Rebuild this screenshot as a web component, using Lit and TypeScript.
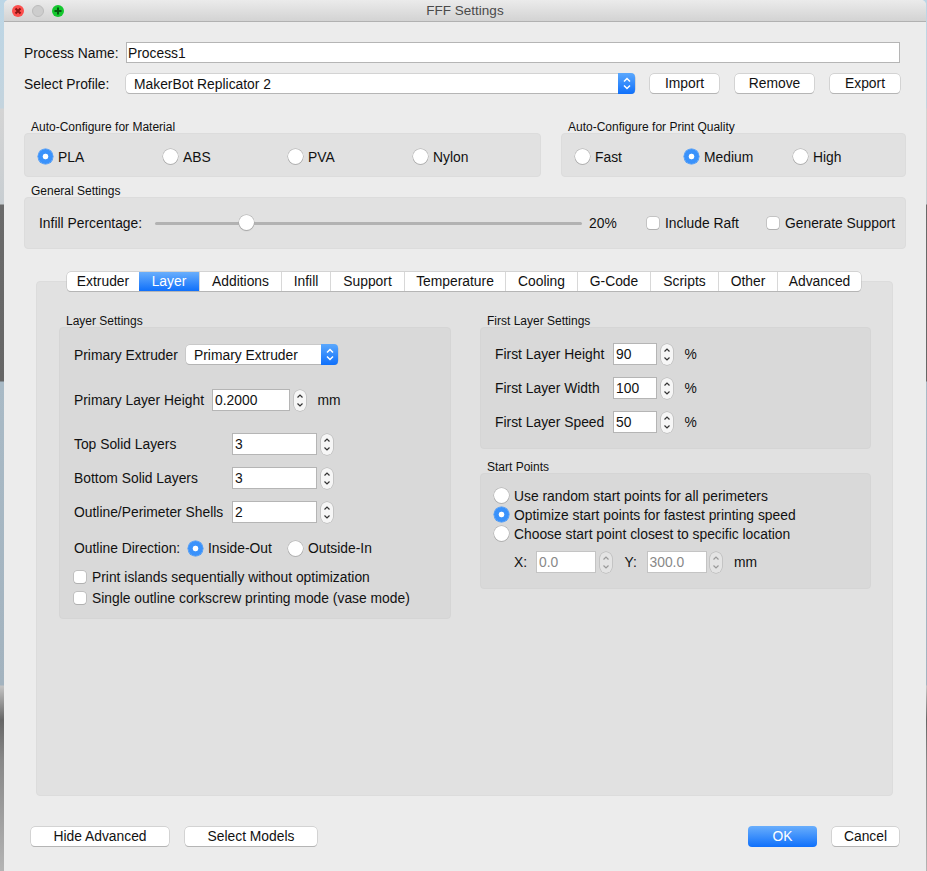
import { LitElement, html, css, TemplateResult } from "lit";
import { customElement } from "lit/decorators.js";

const stepper = (disabled = false): TemplateResult => html`
    <span class="stepper ${disabled ? "off" : ""}">
        <svg width="8" height="17" viewBox="0 0 8 17">
            <path d="M1.5 5.5 L4 3 L6.5 5.5 M1.5 11.5 L4 14 L6.5 11.5" fill="none" stroke="currentColor" stroke-width="1.2" />
        </svg>
    </span>
`;

const chevrons = html`
    <span class="chev">
        <svg width="10" height="17" viewBox="0 0 10 17">
            <path d="M2 6.5 L5 3.5 L8 6.5 M2 10.5 L5 13.5 L8 10.5" fill="none" stroke="#fff" stroke-width="1.5" />
        </svg>
    </span>
`;

const radio = (label: string, on = false): TemplateResult => html`
    <span class="radio-row"><i class="radio ${on ? "on" : ""}"></i>${label}</span>
`;

const check = (label: string): TemplateResult => html`
    <span class="check-row"><i class="check"></i>${label}</span>
`;

@customElement("app-root")
export class AppRoot extends LitElement {
    static styles = css`
        :host {
            background: linear-gradient(
                #bcd6e6 0,
                #c4d4de 108px,
                #d4d4d4 109px,
                #c8ced2 204px,
                #6a6a6a 205px,
                #666 381px,
                #a9bac6 382px,
                #a3b3bf 685px,
                #c4c4c4 686px,
                #666 720px,
                #888 760px,
                #b4b4b4 871px
            );
            box-sizing: border-box;
            color: #111;
            display: block;
            font-family: "Liberation Sans", Arial, sans-serif;
            font-size: 13.85px;
            height: 871px;
            overflow: hidden;
            padding-left: 4px;
            width: 927px;
        }

        .window {
            background: #ececec;
            border-radius: 5px 5px 0 0;
            height: 871px;
            width: 922px;
        }

        .titlebar {
            align-items: center;
            background: linear-gradient(#ebebeb, #d3d3d3);
            border-bottom: 1px solid #b1b1b1;
            border-radius: 5px 5px 0 0;
            color: #4a4a4a;
            display: flex;
            font-size: 13.5px;
            height: 21px;
            justify-content: center;
            position: relative;
        }

        .lights {
            display: flex;
            gap: 8px;
            left: 8px;
            position: absolute;
            top: 5px;
        }

        .light {
            border-radius: 50%;
            height: 12px;
            width: 12px;
        }

        .light svg {
            display: block;
        }

        .red { background: #fc4e4c; }
        .grey { background: #cdcdcd; border: 1px solid #bcbcbc; box-sizing: border-box; }
        .green { background: #14c72e; }

        .body {
            padding: 20px 20px 0;
        }

        .row {
            align-items: center;
            display: flex;
        }

        .process-row {
            padding-right: 6px;
        }

        .label-name {
            width: 102px;
        }

        .text-field {
            background: #fff;
            border: 1px solid #b5b5b5;
            box-sizing: border-box;
            flex: 1;
            height: 21px;
            line-height: 20px;
            padding-left: 1px;
        }

        .profile-row {
            margin-top: 11px;
        }

        .select {
            background: #fff;
            border-radius: 4px;
            box-shadow: 0 0 0 0.5px #b9b9b9, 0 1px 0 #b0b0b0;
            box-sizing: border-box;
            display: flex;
            height: 19px;
            justify-content: space-between;
            line-height: 20px;
            padding-left: 8px;
        }

        .select.profile {
            margin-right: 15px;
            width: 509px;
        }

        .chev {
            align-items: center;
            background: linear-gradient(#5ba8fd, #0f70fb);
            border-radius: 0 4px 4px 0;
            display: flex;
            height: 21px;
            justify-content: center;
            margin-top: -1px;
            width: 17px;
        }

        .btn {
            background: #fff;
            border-radius: 4px;
            box-shadow: 0 0 0 0.5px #b9b9b9, 0 1px 0 #b0b0b0;
            box-sizing: border-box;
            height: 19px;
            line-height: 19px;
            text-align: center;
        }

        .btn.primary {
            background: linear-gradient(#69aefc, #0f70fb);
            box-shadow: none;
            color: #fff;
            height: 21px;
            line-height: 21px;
            margin-top: -1px;
            width: 69px;
        }

        .import { width: 69px; }
        .remove { width: 79px; }
        .export { width: 70px; }
        .hide-advanced { width: 138px; }
        .select-models { width: 132px; }
        .cancel { width: 67px; }

        .file-btns {
            display: flex;
            gap: 16px;
        }

        .group-title {
            color: #111;
            font-size: 12px;
            height: 14px;
            line-height: 16px;
            padding-left: 7px;
        }

        .group {
            background: #e1e1e1;
            border-radius: 4px;
            border: 1px solid #dcdcdc;
            box-sizing: border-box;
        }

        .auto-row {
            display: flex;
            gap: 20px;
            margin-top: 26px;
        }

        .material {
            width: 517px;
        }

        .quality {
            width: 345px;
        }

        .auto-group {
            align-items: center;
            display: flex;
            height: 44px;
            padding: 3px 0 0 13px;
        }

        .radio-row,
        .check-row {
            align-items: center;
            display: inline-flex;
            white-space: nowrap;
        }

        .radio {
            background: #fff;
            border-radius: 50%;
            box-shadow: 0 0 0 0.5px #a8a8a8, 0 1px 0 #bbb;
            display: inline-block;
            flex: none;
            height: 15px;
            margin-right: 5px;
            position: relative;
            width: 15px;
        }

        .radio.on {
            background: radial-gradient(circle, #fff 0, #fff 2.5px, #3a92fb 3.2px);
            box-shadow: 0 0 0 0.5px #3a92fb;
        }

        .check {
            background: #fff;
            border-radius: 3px;
            box-shadow: 0 0 0 0.5px #a8a8a8, 0 1px 0 #bbb;
            display: inline-block;
            flex: none;
            height: 12px;
            margin-right: 6px;
            width: 12px;
        }

        .material .radio-row { width: 125px; }
        .quality .radio-row { width: 109px; }

        .general-title {
            margin-top: 6px;
        }

        .general {
            align-items: center;
            display: flex;
            height: 52px;
            padding-left: 14px;
        }

        .infill-label {
            width: 116px;
        }

        .slider {
            align-items: center;
            display: flex;
            height: 18px;
            position: relative;
            width: 427px;
        }

        .slider::before {
            background: #b2b2b2;
            border-radius: 2px;
            content: "";
            height: 3px;
            width: 100%;
        }

        .thumb {
            background: #fff;
            border-radius: 50%;
            box-shadow: 0 0 0 0.5px #a8a8a8, 0 1px 1px #aaa;
            height: 15px;
            left: 84px;
            position: absolute;
            top: 1px;
            width: 15px;
        }

        .pct {
            margin-left: 7px;
            width: 58px;
        }

        .general .check-row {
            width: 120px;
        }

        .tab-panel {
            background: #e1e1e1;
            border: 1px solid #dcdcdc;
            border-radius: 4px;
            box-sizing: border-box;
            height: 515px;
            margin-left: 12px;
            margin-top: 32px;
            padding: 0 21px 0 22px;
            position: relative;
            width: 857px;
        }

        .tabs {
            background: #fff;
            border-radius: 4px;
            box-shadow: 0 0 0 0.5px #b9b9b9, 0 1px 0 #b0b0b0;
            display: flex;
            height: 19px;
            left: 30px;
            line-height: 19px;
            overflow: hidden;
            position: absolute;
            top: -10px;
        }

        .tab {
            border-left: 1px solid #d8d8d8;
            box-sizing: border-box;
            text-align: center;
        }

        .tab:first-child {
            border-left: 0;
        }

        .tab.active {
            background: linear-gradient(#69aefc, #0f70fb);
            border-left: 0;
            color: #fff;
        }

        .columns {
            display: flex;
            gap: 29px;
            padding-top: 31px;
        }

        .col-left {
            width: 392px;
        }

        .col-right {
            width: 391px;
        }

        .inner {
            background: #d9d9d9;
            border: 1px solid #d5d5d5;
            border-radius: 4px;
            box-sizing: border-box;
        }

        .layer-settings {
            height: 292px;
            padding: 17px 14px 0;
        }

        .first-layer {
            height: 122px;
            padding: 9px 14px 0;
        }

        .start-points {
            height: 116px;
            padding: 12px 13px 0;
        }

        .start-title {
            margin-top: 10px;
        }

        .field {
            background: #fff;
            border: 1px solid #b5b5b5;
            box-sizing: border-box;
            height: 22px;
            line-height: 20px;
            padding-left: 2px;
        }

        .stepper {
            align-items: center;
            background: #f6f6f6;
            border-radius: 6px;
            box-shadow: 0 0 0 0.5px #b0b0b0;
            color: #333;
            display: inline-flex;
            height: 21px;
            justify-content: center;
            margin-left: 3.5px;
            width: 12px;
        }

        .stepper.off {
            background: #e4e4e4;
            color: #999;
        }

        .extruder-row .label {
            width: 112px;
        }

        .select.extruder {
            width: 152px;
        }

        .height-row {
            margin-top: 25px;
        }

        .height-row .label {
            width: 138px;
        }

        .height-row .field {
            width: 78px;
        }

        .unit {
            margin-left: 12px;
        }

        .solid-row {
            height: 34px;
        }

        .solid-first {
            margin-top: 16px;
        }

        .solid-row .label {
            width: 158px;
        }

        .solid-row .field {
            width: 85px;
        }

        .direction-row {
            height: 22px;
            margin-top: 8px;
        }

        .direction-row .label {
            width: 114px;
        }

        .direction-row .radio-row {
            width: 100px;
        }

        .checks {
            display: flex;
            flex-direction: column;
            margin-top: 7px;
        }

        .checks .check-row {
            height: 21px;
        }

        .first-row {
            height: 34px;
        }

        .first-row .label {
            width: 118px;
        }

        .first-row .field {
            width: 44px;
        }

        .start-list {
            display: flex;
            flex-direction: column;
        }

        .start-list .radio-row {
            height: 19px;
        }

        .xy-row {
            margin-top: 8px;
            padding-left: 20px;
        }

        .xy-row .field {
            border-color: #c4c4c4;
            color: #888;
            width: 60px;
        }

        .xy-label {
            width: 22px;
        }

        .xy-label.y {
            margin-left: 13px;
        }

        .footer {
            display: flex;
            justify-content: space-between;
            margin-top: 31px;
            padding: 0 7px;
        }

        .footer-group {
            display: flex;
            gap: 16px;
        }

        .footer-group.confirm {
            gap: 15px;
        }
    `;

    render(): TemplateResult {
        const tabs: [string, number, boolean?][] = [
            ["Extruder", 72],
            ["Layer", 60, true],
            ["Additions", 82],
            ["Infill", 49],
            ["Support", 74],
            ["Temperature", 101],
            ["Cooling", 72],
            ["G-Code", 73],
            ["Scripts", 68],
            ["Other", 59],
            ["Advanced", 84],
        ];
        return html`
            <div class="window">
                <div class="titlebar">
                    <div class="lights">
                        <span class="light red">
                            <svg width="12" height="12" viewBox="0 0 12 12">
                                <path d="M3.5 3.5 L8.5 8.5 M8.5 3.5 L3.5 8.5" stroke="#8c1512" stroke-width="2" />
                            </svg>
                        </span>
                        <span class="light grey"></span>
                        <span class="light green">
                            <svg width="12" height="12" viewBox="0 0 12 12">
                                <path d="M6 2.5 V9.5 M2.5 6 H9.5" stroke="#045c10" stroke-width="2" />
                            </svg>
                        </span>
                    </div>
                    FFF Settings
                </div>
                <div class="body">
                    <div class="row process-row">
                        <span class="label-name">Process Name:</span>
                        <div class="text-field">Process1</div>
                    </div>
                    <div class="row profile-row">
                        <span class="label-name">Select Profile:</span>
                        <div class="select profile">MakerBot Replicator 2 ${chevrons}</div>
                        <div class="file-btns">
                            <div class="btn import">Import</div>
                            <div class="btn remove">Remove</div>
                            <div class="btn export">Export</div>
                        </div>
                    </div>

                    <div class="auto-row">
                        <div class="material">
                            <div class="group-title">Auto-Configure for Material</div>
                            <div class="group auto-group">
                                ${radio("PLA", true)} ${radio("ABS")} ${radio("PVA")} ${radio("Nylon")}
                            </div>
                        </div>
                        <div class="quality">
                            <div class="group-title">Auto-Configure for Print Quality</div>
                            <div class="group auto-group">
                                ${radio("Fast")} ${radio("Medium", true)} ${radio("High")}
                            </div>
                        </div>
                    </div>

                    <div class="group-title general-title">General Settings</div>
                    <div class="group general">
                        <span class="infill-label">Infill Percentage:</span>
                        <div class="slider"><i class="thumb"></i></div>
                        <span class="pct">20%</span>
                        ${check("Include Raft")} ${check("Generate Support")}
                    </div>

                    <div class="tab-panel">
                        <div class="tabs">
                            ${tabs.map(
                                ([name, width, active]) =>
                                    html`<div class="tab ${active ? "active" : ""}" style="width: ${width}px">${name}</div>`,
                            )}
                        </div>
                        <div class="columns">
                            <div class="col-left">
                                <div class="group-title">Layer Settings</div>
                                <div class="inner layer-settings">
                                    <div class="row extruder-row">
                                        <span class="label">Primary Extruder</span>
                                        <div class="select extruder">Primary Extruder ${chevrons}</div>
                                    </div>
                                    <div class="row height-row">
                                        <span class="label">Primary Layer Height</span>
                                        <div class="field">0.2000</div>
                                        ${stepper()}
                                        <span class="unit">mm</span>
                                    </div>
                                    <div class="row solid-row solid-first">
                                        <span class="label">Top Solid Layers</span>
                                        <div class="field">3</div>
                                        ${stepper()}
                                    </div>
                                    <div class="row solid-row">
                                        <span class="label">Bottom Solid Layers</span>
                                        <div class="field">3</div>
                                        ${stepper()}
                                    </div>
                                    <div class="row solid-row">
                                        <span class="label">Outline/Perimeter Shells</span>
                                        <div class="field">2</div>
                                        ${stepper()}
                                    </div>
                                    <div class="row direction-row">
                                        <span class="label">Outline Direction:</span>
                                        ${radio("Inside-Out", true)} ${radio("Outside-In")}
                                    </div>
                                    <div class="checks">
                                        ${check("Print islands sequentially without optimization")}
                                        ${check("Single outline corkscrew printing mode (vase mode)")}
                                    </div>
                                </div>
                            </div>
                            <div class="col-right">
                                <div class="group-title">First Layer Settings</div>
                                <div class="inner first-layer">
                                    ${[
                                        ["First Layer Height", "90"],
                                        ["First Layer Width", "100"],
                                        ["First Layer Speed", "50"],
                                    ].map(
                                        ([label, value]) => html`
                                            <div class="row first-row">
                                                <span class="label">${label}</span>
                                                <div class="field">${value}</div>
                                                ${stepper()}
                                                <span class="unit">%</span>
                                            </div>
                                        `,
                                    )}
                                </div>
                                <div class="group-title start-title">Start Points</div>
                                <div class="inner start-points">
                                    <div class="start-list">
                                        ${radio("Use random start points for all perimeters")}
                                        ${radio("Optimize start points for fastest printing speed", true)}
                                        ${radio("Choose start point closest to specific location")}
                                    </div>
                                    <div class="row xy-row">
                                        <span class="xy-label">X:</span>
                                        <div class="field">0.0</div>
                                        ${stepper(true)}
                                        <span class="xy-label y">Y:</span>
                                        <div class="field">300.0</div>
                                        ${stepper(true)}
                                        <span class="unit">mm</span>
                                    </div>
                                </div>
                            </div>
                        </div>
                    </div>

                    <div class="footer">
                        <div class="footer-group">
                            <div class="btn hide-advanced">Hide Advanced</div>
                            <div class="btn select-models">Select Models</div>
                        </div>
                        <div class="footer-group confirm">
                            <div class="btn primary">OK</div>
                            <div class="btn cancel">Cancel</div>
                        </div>
                    </div>
                </div>
            </div>
        `;
    }
}
